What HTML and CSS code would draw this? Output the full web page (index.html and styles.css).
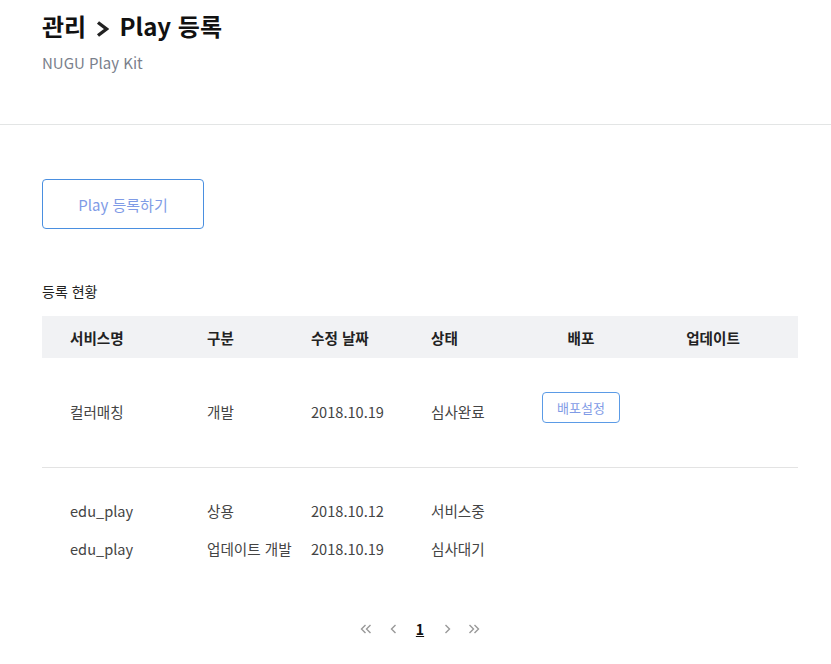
FILE: index.html
```html
<!DOCTYPE html>
<html lang="ko">
<head>
<meta charset="utf-8">
<link rel="stylesheet" href="styles.css">
</head>
<body>
<header class="top">
  <h1 class="title">관리 <svg class="chev" width="13" height="16" viewBox="0 0 13 16"><path d="M2 1.5 L10.5 8 L2 14.5" fill="none" stroke="#222" stroke-width="3.4"/></svg> Play 등록</h1>
  <p class="subtitle">NUGU Play Kit</p>
</header>
<main class="content">
  <button class="btn-register">Play 등록하기</button>
  <h2 class="section-title">등록 현황</h2>
  <div class="table">
    <div class="row head">
      <div class="c c1">서비스명</div>
      <div class="c c2">구분</div>
      <div class="c c3">수정 날짜</div>
      <div class="c c4">상태</div>
      <div class="c c5">배포</div>
      <div class="c c6">업데이트</div>
    </div>
    <div class="row first">
      <div class="c c1">컬러매칭</div>
      <div class="c c2">개발</div>
      <div class="c c3">2018.10.19</div>
      <div class="c c4">심사완료</div>
      <div class="c c5"><button class="btn-deploy">배포설정</button></div>
      <div class="c c6"></div>
    </div>
    <div class="group">
      <div class="row item">
        <div class="c c1">edu_play</div>
        <div class="c c2">상용</div>
        <div class="c c3">2018.10.12</div>
        <div class="c c4">서비스중</div>
        <div class="c c5"></div>
        <div class="c c6"></div>
      </div>
      <div class="row item">
        <div class="c c1">edu_play</div>
        <div class="c c2">업데이트 개발</div>
        <div class="c c3">2018.10.19</div>
        <div class="c c4">심사대기</div>
        <div class="c c5"></div>
        <div class="c c6"></div>
      </div>
    </div>
  </div>
  <nav class="pager">
    <span class="pg"><svg width="12" height="10" viewBox="0 0 12 10"><path d="M5.5 1 L1.5 5 L5.5 9 M10.5 1 L6.5 5 L10.5 9" fill="none" stroke="#999" stroke-width="1.4"/></svg></span>
    <span class="pg"><svg width="7" height="10" viewBox="0 0 7 10"><path d="M5.5 1 L1.5 5 L5.5 9" fill="none" stroke="#999" stroke-width="1.4"/></svg></span>
    <span class="pg current">1</span>
    <span class="pg"><svg width="7" height="10" viewBox="0 0 7 10"><path d="M1.5 1 L5.5 5 L1.5 9" fill="none" stroke="#999" stroke-width="1.4"/></svg></span>
    <span class="pg"><svg width="12" height="10" viewBox="0 0 12 10"><path d="M1.5 1 L5.5 5 L1.5 9 M6.5 1 L10.5 5 L6.5 9" fill="none" stroke="#999" stroke-width="1.4"/></svg></span>
  </nav>
</main>
</body>
</html>
```
FILE: styles.css
```css
* { box-sizing: border-box; }
html, body { margin: 0; padding: 0; background: #fff; }
body {
  font-family: "Noto Sans CJK KR", "Noto Sans", sans-serif;
  color: #333;
  font-size: 14px;
}
.top {
  height: 125px;
  padding: 10px 42px 0;
  border-bottom: 1px solid #e3e5e5;
}
.title {
  margin: 0;
  font-size: 24px;
  line-height: 32px;
  font-weight: 700;
  color: #111;
}
.chev { vertical-align: -1px; margin: 0 4px 0 3px; }
.subtitle {
  margin: 10px 0 0;
  font-size: 15px;
  line-height: 22px;
  color: #7a808c;
}
.content {
  padding: 54px 33px 0 42px;
}
.btn-register {
  display: block;
  width: 162px;
  height: 50px;
  border: 1px solid #4a8fe0;
  border-radius: 4px;
  background: #fff;
  color: #7f9be6;
  font-family: inherit;
  font-size: 15px;
  padding: 0;
}
.section-title {
  margin: 52px 0 0;
  font-size: 14px;
  line-height: 20px;
  font-weight: 400;
  color: #222;
}
.table { margin-top: 15px; font-size: 14.6px; }
.row {
  display: grid;
  grid-template-columns: 137px 104px 120px 112px 132px 151px;
  align-items: center;
}
.c { padding-left: 28px; white-space: nowrap; }
.c5 { padding-left: 0; text-align: center; }
.c6 { padding-left: 0; padding-right: 19px; text-align: center; }
.head {
  height: 42px;
  background: #f1f2f4;
  font-weight: 700;
  color: #222;
}
.first {
  height: 110px;
  border-bottom: 1px solid #e3e3e3;
  color: #444;
  padding-bottom: 3px;
}
.btn-deploy {
  width: 78px;
  height: 31px;
  margin-bottom: 7px;
  border: 1px solid #5b9be6;
  border-radius: 4px;
  background: #fff;
  color: #7f9be6;
  font-family: inherit;
  font-size: 13px;
  padding: 0;
}
.group { padding-top: 23px; }
.item { height: 38px; color: #444; }
.pager {
  margin-top: 52px;
  margin-left: -42px;
  margin-right: -33px;
  padding-left: 9px;
  display: flex;
  justify-content: center;
  align-items: center;
  gap: 15px;
  line-height: 20px;
}
.pg {
  display: inline-flex;
  justify-content: center;
  align-items: center;
  width: 12px;
  color: #999;
}
.current {
  color: #111;
  font-weight: 700;
  font-size: 14px;
  text-decoration: underline;
}
```
